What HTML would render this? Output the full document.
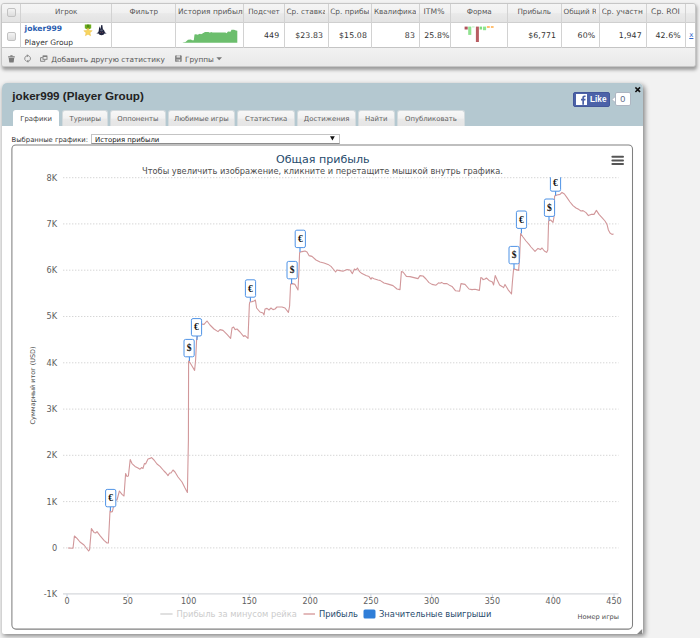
<!DOCTYPE html>
<html lang="ru">
<head>
<meta charset="utf-8">
<title>joker999 (Player Group)</title>
<style>
*{box-sizing:border-box;margin:0;padding:0}
html,body{width:700px;height:638px;overflow:hidden;background:#f2f2f2}
body{position:relative;font-family:"DejaVu Sans","Liberation Sans",sans-serif;font-size:7.5px;color:#333}
.abs{position:absolute}
#grid{position:absolute;left:1.2px;top:3px;width:694.7px;height:64.4px;background:#ececec;border:1px solid #c6c6c6;border-radius:3px;box-shadow:1px 2.5px 3.5px rgba(0,0,0,.36);overflow:hidden}
#grid .hrow{position:absolute;left:0;top:0;width:100%;height:19px;background:linear-gradient(#f5f5f5 0%,#f0f0f0 48%,#e9e9e9 54%,#e3e3e3 100%);border-bottom:1px solid #cfcfcf}
#grid .drow{position:absolute;left:0;top:19px;width:100%;height:25px;background:#fff;border-bottom:1px solid #c4c4c4}
#grid .frow{position:absolute;left:0;top:44px;width:100%;height:19.4px;background:linear-gradient(#f2f2f2,#e8e8e8)}
.vl{position:absolute;top:0;width:1px;height:44px;background:#d2d2d2}
.th{position:absolute;top:0;height:18px;line-height:15.6px;font-size:7.2px;color:#555;white-space:nowrap;overflow:hidden}
.td{position:absolute;top:19px;height:24px;line-height:25.6px;font-size:7.8px;letter-spacing:.12px;color:#333;white-space:nowrap;text-align:right}
.xl{position:absolute;top:19px;line-height:25.6px;font-size:7px;color:#3366cc;text-decoration:underline}
.pname{position:absolute;left:22.4px;top:19px;font-weight:bold;font-size:7.6px;line-height:11px;color:#2a5db0}
.pgrp{position:absolute;left:22.4px;top:32.8px;font-size:7.5px;line-height:11px;color:#333}
.cb{position:absolute;width:9px;height:9px;border:1px solid #c2c2c2;border-radius:2px;background:linear-gradient(#f4f4f4,#dcdcdc)}
.ft{position:absolute;top:50px;font-size:7.34px;line-height:11px;color:#555;white-space:nowrap}
#panel{position:absolute;left:2px;top:83.3px;width:641.4px;height:551.2px;background:#fff;border-radius:5px 5px 2px 2px;box-shadow:1.5px 2px 5px rgba(0,0,0,.45)}
#phead{position:absolute;left:0;top:0;width:100%;height:42.9px;background:#b4c8d0;border-radius:5px 5px 0 0}
#ptitle{position:absolute;left:10.3px;top:6px;font-family:"Liberation Sans",sans-serif;font-weight:bold;font-size:11.67px;color:#222;line-height:14px;white-space:nowrap}
.tab{position:absolute;top:26.6px;height:16.3px;background:linear-gradient(#f7f7f7 0%,#f1f1f1 48%,#e9e9e9 54%,#e5e5e5 100%);border:1px solid #d3dadd;border-bottom:none;border-radius:3px 3px 0 0;font-size:6.9px;color:#606060;text-align:center;line-height:16.6px;white-space:nowrap}
.tab.act{background:#fff;height:17.5px;border-color:#fff;color:#444}
#sel{position:absolute;left:91px;top:133.7px;width:248.6px;height:10.7px;border:1px solid #c4c4c4;border-bottom-color:#8c8c8c;background:#fff;font-size:6.9px;line-height:10.8px;color:#111;padding-left:3px;white-space:nowrap}
#sellab{position:absolute;left:11.6px;top:134.9px;font-size:6.8px;line-height:10.4px;color:#333;white-space:nowrap}
#like{position:absolute;left:573.3px;top:92px;width:36.3px;height:14.6px;background:#4c62a8;border-radius:2px;border:1px solid #43579a}
#like .f{position:absolute;left:1.8px;top:.9px;width:10.8px;height:10.8px;background:#fff;overflow:hidden}
#like .t{position:absolute;left:15.8px;top:0;font-family:"Liberation Sans",sans-serif;font-weight:bold;font-size:8.2px;line-height:13.6px;color:#fff}
#cnt{position:absolute;left:614.6px;top:92.4px;width:16.2px;height:14px;background:#fff;border:1px solid #aeb6c2;border-radius:2px;font-family:"Liberation Sans",sans-serif;font-size:9px;line-height:12.6px;text-align:center;color:#5d6b88}
#close{position:absolute;left:634.6px;top:83.6px;font-family:"DejaVu Sans",sans-serif;font-weight:bold;font-size:10px;line-height:12px;color:#111}
</style>
</head>
<body>
<div id="grid">
<div class="hrow"></div><div class="drow"></div><div class="frow"></div>
<div class="vl" style="left:17.8px"></div>
<div class="vl" style="left:109.3px"></div>
<div class="vl" style="left:172.8px"></div>
<div class="vl" style="left:240.8px"></div>
<div class="vl" style="left:281.8px"></div>
<div class="vl" style="left:325.8px"></div>
<div class="vl" style="left:368.8px"></div>
<div class="vl" style="left:416.8px"></div>
<div class="vl" style="left:447.8px"></div>
<div class="vl" style="left:505.3px"></div>
<div class="vl" style="left:558.8px"></div>
<div class="vl" style="left:596.8px"></div>
<div class="vl" style="left:643.8px"></div>
<div class="vl" style="left:682.8px"></div>
<div class="cb" style="left:4.4px;top:4.2px"></div>
<div class="cb" style="left:4.4px;top:28px"></div>
<div class="th" style="left:18.3px;width:91.5px;text-align:center">Игрок</div>
<div class="th" style="left:109.8px;width:63.5px;text-align:center">Фильтр</div>
<div class="th" style="left:175.8px;width:64.7px;text-align:left;font-size:7.45px">История прибыли</div>
<div class="th" style="left:241.3px;width:41.0px;text-align:center">Подсчет</div>
<div class="th" style="left:284.3px;width:38.2px;text-align:left;font-size:7.35px">Ср. ставка</div>
<div class="th" style="left:328.0px;width:38.8px;text-align:left;font-size:7.4px">Ср. прибыль</div>
<div class="th" style="left:371.7px;width:42.6px;text-align:left">Квалификация</div>
<div class="th" style="left:417.3px;width:29.0px;text-align:center;font-size:7.7px">ITM%</div>
<div class="th" style="left:448.3px;width:57.5px;text-align:center">Форма</div>
<div class="th" style="left:505.8px;width:52.5px;text-align:center">Прибыль</div>
<div class="th" style="left:561.3px;width:32.7px;text-align:left">Общий ROI</div>
<div class="th" style="left:599.5px;width:41.4px;text-align:left;font-size:7.4px">Ср. участников</div>
<div class="th" style="left:644.3px;width:38.0px;text-align:center;font-size:7.7px">Ср. ROI</div>
<div class="td" style="right:415.6px;">449</div>
<div class="td" style="right:371.7px;">$23.83</div>
<div class="td" style="right:327.9px;">$15.08</div>
<div class="td" style="right:279.9px;">83</div>
<div class="td" style="right:245.3px;">25.8%</div>
<div class="td" style="right:138.7px;">$6,771</div>
<div class="td" style="right:99.6px;">60%</div>
<div class="td" style="right:53.1px;">1,947</div>
<div class="td" style="right:14.1px;">42.6%</div>
<a class="xl" style="left:687.1px">x</a>
<div class="pname">joker999</div><div class="pgrp">Player Group</div>
<div class="ft" style="left:49.0px">Добавить другую статистику</div>
<div class="ft" style="left:182.8px">Группы</div>
</div>
<svg class="abs" style="left:0;top:0" width="700" height="80" viewBox="0 0 700 80">
<polygon points="182.8,42.5 185.5,42.0 188.0,39.8 191.0,39.5 192.0,40.2 193.8,40.2 194.5,34.5 196.0,34.2 197.5,34.8 200.0,33.8 201.0,34.2 202.5,33.5 205.0,32.0 208.5,32.0 210.0,32.8 211.0,32.0 212.5,32.6 225.5,32.6 226.5,33.2 228.0,31.5 230.5,31.8 231.5,29.8 234.0,29.8 236.0,30.5 237.3,30.8 237.3,42.8 182.8,42.8" fill="#6cbe6d"/>
<rect x="464.6" y="26.6" width="3.1" height="2.9" fill="#b0525a"/><rect x="468.2" y="26.6" width="3.1" height="8.3" fill="#90e290"/><rect x="472.1" y="26.1" width="2.5" height="1.6" fill="#d4f4d4"/><rect x="475.9" y="26.6" width="3.0" height="15.4" fill="#b85c62"/><rect x="479.6" y="26.6" width="2.5" height="2.9" fill="#7fdc7f"/><rect x="483.0" y="26.6" width="3.1" height="3.6" fill="#8ee68e"/><rect x="486.9" y="26.1" width="2.9" height="1.8" fill="#ffb962"/><rect x="490.9" y="26.1" width="2.7" height="1.8" fill="#ffb962"/>
<!-- medal -->
<path d="M84.8 24.5h6.4v3.8l-3.2 1.4l-3.2-1.4z" fill="#6fae22"/>
<path d="M86.9 24.6h2.4v4h-2.4z" fill="#4e8e12"/>
<path d="M88.00 27.65 L89.20 30.44 L92.23 30.72 L89.95 32.73 L90.62 35.70 L88.00 34.15 L85.38 35.70 L86.05 32.73 L83.77 30.72 L86.80 30.44Z" fill="#f7d560" stroke="#eec14a" stroke-width=".5" stroke-linejoin="round"/>
<!-- shark -->
<path d="M98.7 31L99.3 26.2L100.4 29L101.3 25L102.3 25L102.9 29.3C104 29.9 104.6 31 104.8 32.2L106.7 33.6L104.5 33.6C104 34.7 102.9 35.2 101.5 35.2C100.1 35.2 99 34.7 98.5 33.6L96.3 33.6L98.2 32.2Z" fill="#20253f"/>
<rect x="100.2" y="29.6" width="2.6" height="1.6" rx=".6" fill="#69708a" opacity=".75"/><circle cx="100.3" cy="32.4" r=".45" fill="#c06060"/><circle cx="102.7" cy="32.4" r=".45" fill="#c06060"/>
<!-- trash -->
<g fill="#7a7a7a"><rect x="8" y="56.3" width="6.9" height="1.1" rx=".4"/><rect x="10.2" y="55.3" width="2.5" height="1.2" rx=".4"/><path d="M8.7 58h5.5l-.5 4.1a.6.6 0 0 1-.6.5h-3.3a.6.6 0 0 1-.6-.5z"/></g>
<!-- refresh -->
<g fill="none" stroke="#8c8c8c" stroke-width="1"><path d="M27.2 55.7a2.9 2.9 0 0 0-1.3 5.2"/><path d="M28 61.4a2.9 2.9 0 0 0 1.3-5.2"/></g>
<g fill="#8c8c8c"><path d="M26.9 54.3l2.3 1.5l-2.3 1.5z"/><path d="M28.3 59.8l-2.3 1.5l2.3 1.5z"/></g>
<!-- add window -->
<g fill="none" stroke="#7a7a7a" stroke-width=".9"><rect x="43" y="56" width="4" height="3.3"/><path d="M42.6 57.6h-2v3.7h4.2v-1.6"/></g>
<rect x="43" y="55.7" width="4" height="1.2" fill="#7a7a7a"/>
<!-- disk -->
<g><rect x="175.1" y="55.3" width="6.6" height="6.7" rx="1" fill="#808080"/><rect x="176.6" y="55.3" width="3.4" height="2.3" fill="#d8d8d8"/><rect x="176.3" y="59" width="4.2" height="3" fill="#a8a8a8"/><rect x="178.8" y="59.8" width="1.1" height="1.6" fill="#eee"/></g>
<path d="M216.4 57.2h5.6l-2.8 3.1z" fill="#777"/>
</svg>
<div id="panel">
<div id="phead"></div>
<div id="ptitle">joker999 (Player Group)</div>
<div class="tab act" style="left:11.0px;width:46.4px">Графики</div><div class="tab" style="left:60.4px;width:45.6px">Турниры</div><div class="tab" style="left:108.2px;width:55.4px">Оппоненты</div><div class="tab" style="left:166.0px;width:66.8px">Любимые игры</div><div class="tab" style="left:235.4px;width:57.6px">Статистика</div><div class="tab" style="left:295.4px;width:58.4px">Достижения</div><div class="tab" style="left:356.0px;width:36.6px">Найти</div><div class="tab" style="left:395.0px;width:67.8px">Опубликовать</div>
</div>
<div id="like"><div class="f"><svg width="10.8" height="10.8" viewBox="0 0 10.8 10.8"><path d="M6.3 10.8V6.4H5V4.8h1.3V3.7c0-1.4.8-2.2 2.1-2.2h1.2v1.6h-.8c-.6 0-.8.3-.8.8v.9h1.6L9.4 6.4H8v4.4z" fill="#4c62a8"/></svg></div><div class="t">Like</div></div>
<svg class="abs" style="left:610.6px;top:95.5px" width="5" height="7" viewBox="0 0 5 7"><path d="M4.9 0L.8 3.5L4.9 7" fill="#fff" stroke="#aeb6c2" stroke-width=".9"/></svg>
<div id="cnt">0</div>
<svg class="abs" style="left:633.7px;top:85.7px" width="8" height="8" viewBox="0 0 8 8"><path d="M2 2l3.5 3.4M5.5 2l-3.5 3.4" stroke="#111" stroke-width="1.6" stroke-linecap="square" fill="none"/></svg>
<div id="sellab">Выбранные графики:</div>
<div id="sel">История прибыли</div>
<svg class="abs" style="left:330px;top:136px" width="5" height="5" viewBox="0 0 5 5"><path d="M0 .2h4.8L2.4 4.6z" fill="#111"/></svg>
<svg class="abs" style="left:0;top:0" width="700" height="638" viewBox="0 0 700 638">
<defs><clipPath id="plot"><rect x="60" y="177.2" width="562" height="420"/></clipPath></defs>
<rect x="11.9" y="145" width="620.6" height="484.1" rx="4" fill="#fff" stroke="#808080" stroke-width="1.05"/>
<g stroke="#d6d6d6" stroke-width="1" stroke-dasharray="1.4 1.6" fill="none"><line x1="63" x2="618.5" y1="547.9" y2="547.9"/><line x1="63" x2="618.5" y1="501.6" y2="501.6"/><line x1="63" x2="618.5" y1="455.3" y2="455.3"/><line x1="63" x2="618.5" y1="409.1" y2="409.1"/><line x1="63" x2="618.5" y1="362.8" y2="362.8"/><line x1="63" x2="618.5" y1="316.5" y2="316.5"/><line x1="63" x2="618.5" y1="270.2" y2="270.2"/><line x1="63" x2="618.5" y1="223.9" y2="223.9"/><line x1="63" x2="618.5" y1="177.7" y2="177.7"/></g>
<line x1="63" x2="618.5" y1="593.9" y2="593.9" stroke="#d6d8dc" stroke-width="1.1"/>
<g stroke="#c9d4e2" stroke-width="1"><line x1="67.0" x2="67.0" y1="593.9" y2="597"/><line x1="127.8" x2="127.8" y1="593.9" y2="597"/><line x1="188.6" x2="188.6" y1="593.9" y2="597"/><line x1="249.3" x2="249.3" y1="593.9" y2="597"/><line x1="310.1" x2="310.1" y1="593.9" y2="597"/><line x1="370.9" x2="370.9" y1="593.9" y2="597"/><line x1="431.7" x2="431.7" y1="593.9" y2="597"/><line x1="492.4" x2="492.4" y1="593.9" y2="597"/><line x1="553.2" x2="553.2" y1="593.9" y2="597"/><line x1="614.0" x2="614.0" y1="593.9" y2="597"/></g>
<g font-family="DejaVu Sans, Liberation Sans, sans-serif" font-size="8.2" fill="#5e5e5e" text-anchor="end"><text x="57.2" y="597.1">-1K</text><text x="57.2" y="550.8">0</text><text x="57.2" y="504.5">1K</text><text x="57.2" y="458.2">2K</text><text x="57.2" y="412.0">3K</text><text x="57.2" y="365.7">4K</text><text x="57.2" y="319.4">5K</text><text x="57.2" y="273.1">6K</text><text x="57.2" y="226.8">7K</text><text x="57.2" y="180.6">8K</text></g>
<g font-family="DejaVu Sans, Liberation Sans, sans-serif" font-size="8.0" fill="#5e5e5e" text-anchor="middle"><text x="67.0" y="604.1">0</text><text x="127.8" y="604.1">50</text><text x="188.6" y="604.1">100</text><text x="249.3" y="604.1">150</text><text x="310.1" y="604.1">200</text><text x="370.9" y="604.1">250</text><text x="431.7" y="604.1">300</text><text x="492.4" y="604.1">350</text><text x="553.2" y="604.1">400</text><text x="614.0" y="604.1">450</text></g>
<text x="322.8" y="163" font-family="DejaVu Sans, Liberation Sans, sans-serif" font-size="11.1" fill="#274b6d" text-anchor="middle">Общая прибыль</text>
<text x="322.5" y="173.5" font-family="DejaVu Sans, Liberation Sans, sans-serif" font-size="8.27" fill="#4d4d4d" text-anchor="middle">Чтобы увеличить изображение, кликните и перетащите мышкой внутрь графика.</text>
<text transform="translate(34.5,385.4) rotate(-90)" font-family="DejaVu Sans, Liberation Sans, sans-serif" font-size="6.47" fill="#4d4d4d" text-anchor="middle">Суммарный итог (USD)</text>
<text x="619" y="619" font-family="DejaVu Sans, Liberation Sans, sans-serif" font-size="6.6" fill="#4d4d4d" text-anchor="end">Номер игры</text>
<g clip-path="url(#plot)">
<path d="M68.0 548.0 L73.0 548.2 L74.4 536.0 L77.0 538.4 L80.0 542.0 L84.0 545.0 L88.6 551.0 L89.6 549.6 L91.4 528.6 L94.0 532.4 L95.6 533.0 L97.0 531.6 L100.0 535.6 L104.0 540.4 L107.0 543.0 L108.4 543.0 L110.0 511.0 L111.0 512.0 L112.4 511.6 L113.4 507.0 L115.0 500.0 L117.0 500.0 L119.4 491.0 L122.0 494.4 L124.0 496.0 L125.6 473.6 L127.0 476.4 L128.4 476.0 L130.2 459.6 L132.0 463.6 L135.0 466.4 L138.0 468.0 L140.0 469.2 L141.6 467.6 L143.0 468.4 L144.4 463.6 L145.6 464.0 L148.0 459.0 L150.0 458.4 L151.6 457.6 L154.0 460.0 L157.0 464.0 L160.0 466.4 L164.0 471.0 L166.0 473.0 L168.0 475.6 L169.6 473.0 L171.0 473.0 L173.0 470.0 L175.0 472.0 L178.0 477.0 L182.0 482.0 L185.0 488.0 L187.4 492.4 L188.4 440.0 L188.6 361.0 L189.0 361.0 L192.0 366.0 L194.6 370.4 L195.6 360.0 L196.6 340.0 L198.0 333.0 L199.5 326.0 L201.6 324.0 L204.0 324.4 L207.0 321.0 L210.0 325.0 L214.0 329.0 L218.0 331.6 L220.0 329.6 L223.0 330.4 L227.0 334.4 L230.6 338.4 L232.0 328.0 L233.6 327.0 L235.0 329.6 L237.0 329.0 L240.0 332.0 L243.6 336.4 L245.0 335.6 L248.0 338.4 L249.4 304.0 L249.8 302.0 L252.0 301.6 L254.0 301.0 L255.4 300.0 L256.6 308.0 L260.0 312.0 L263.0 313.0 L264.0 315.0 L265.0 309.0 L267.0 308.4 L269.0 310.0 L271.0 308.0 L273.0 309.6 L275.0 309.0 L277.0 307.0 L282.0 307.0 L285.0 308.0 L288.4 312.4 L289.6 306.0 L290.6 284.0 L292.4 283.6 L295.0 284.4 L298.0 290.0 L299.0 270.0 L299.6 252.4 L302.0 251.6 L305.0 251.0 L307.0 252.0 L309.0 255.6 L312.0 256.4 L316.0 260.0 L320.0 262.0 L324.0 263.0 L328.0 264.4 L331.0 266.4 L334.0 270.0 L335.6 272.0 L337.0 270.0 L340.0 270.6 L343.0 271.2 L347.0 269.6 L350.0 270.0 L352.4 273.6 L354.4 269.0 L356.0 270.0 L357.4 268.0 L359.6 271.6 L362.0 273.6 L366.0 275.6 L369.0 276.6 L371.0 279.2 L372.0 277.6 L374.0 278.8 L378.0 280.0 L380.0 280.4 L384.0 283.0 L389.0 284.4 L393.0 285.6 L397.0 289.0 L400.0 289.6 L401.4 271.6 L403.0 272.0 L406.4 276.4 L410.0 276.6 L414.0 277.6 L418.0 278.6 L420.0 275.6 L423.0 276.0 L426.0 279.0 L429.0 282.6 L432.0 284.4 L436.0 285.2 L438.6 282.8 L440.0 283.2 L441.6 282.4 L443.6 283.6 L447.0 283.6 L450.0 285.6 L452.0 286.4 L455.6 290.8 L459.6 291.2 L461.0 283.6 L465.0 284.4 L469.0 289.0 L472.0 289.6 L475.0 289.2 L479.4 290.4 L480.8 277.6 L482.0 278.0 L483.0 279.6 L485.0 279.0 L486.4 278.0 L489.0 280.4 L492.4 282.0 L493.6 285.0 L495.2 275.6 L497.0 279.6 L499.6 285.0 L502.0 286.4 L503.6 287.6 L505.0 284.4 L508.0 289.6 L511.5 294.0 L512.4 282.0 L513.6 269.0 L516.0 269.6 L518.6 270.4 L519.6 258.0 L520.6 233.6 L523.0 237.0 L526.0 241.0 L529.0 244.4 L531.0 247.0 L535.0 251.4 L538.0 248.4 L540.4 249.6 L542.0 248.0 L544.4 251.0 L546.6 252.4 L547.8 250.0 L548.6 221.0 L550.6 220.0 L553.0 222.4 L554.0 217.0 L554.6 196.0 L557.0 195.0 L560.0 194.4 L562.0 192.4 L564.4 194.0 L567.0 197.6 L570.0 202.0 L573.0 205.6 L576.0 208.0 L579.0 209.6 L581.0 211.0 L583.0 210.6 L586.0 212.6 L588.4 215.6 L591.0 214.4 L594.0 214.4 L596.4 210.4 L599.0 214.4 L602.0 217.6 L605.0 221.0 L607.0 224.4 L608.4 230.0 L610.0 233.0 L612.0 234.4 L613.6 234.0" fill="none" stroke="#d1979a" stroke-width="1.1" stroke-linejoin="round"/>
<g font-family="Liberation Serif, DejaVu Serif, serif" font-weight="bold" font-size="9.6" fill="#111" text-anchor="middle"><g><path d="M110.4 506.4V511.0" stroke="#4a8fe4" stroke-width="1.1" fill="none"/><rect x="105.6" y="489.4" width="10.2" height="17.4" rx="1.6" fill="#fff" stroke="#4f93e6" stroke-width="1"/><text x="110.7" y="501.2">€</text></g><g><path d="M189.4 356.4V361.0" stroke="#4a8fe4" stroke-width="1.1" fill="none"/><rect x="184.0" y="339.4" width="10.2" height="17.4" rx="1.6" fill="#fff" stroke="#4f93e6" stroke-width="1"/><text x="189.1" y="351.2">$</text></g><g><path d="M197.0 335.6V340.0" stroke="#4a8fe4" stroke-width="1.1" fill="none"/><rect x="191.4" y="318.6" width="10.2" height="17.4" rx="1.6" fill="#fff" stroke="#4f93e6" stroke-width="1"/><text x="196.5" y="330.4">€</text></g><g><path d="M250.4 296.8V301.5" stroke="#4a8fe4" stroke-width="1.1" fill="none"/><rect x="245.4" y="279.8" width="10.2" height="17.4" rx="1.6" fill="#fff" stroke="#4f93e6" stroke-width="1"/><text x="250.5" y="291.6">€</text></g><g><path d="M291.6 278.4V284.0" stroke="#4a8fe4" stroke-width="1.1" fill="none"/><rect x="287.0" y="261.4" width="10.2" height="17.4" rx="1.6" fill="#fff" stroke="#4f93e6" stroke-width="1"/><text x="292.1" y="273.2">$</text></g><g><path d="M300.0 247.2V252.0" stroke="#4a8fe4" stroke-width="1.1" fill="none"/><rect x="295.2" y="230.2" width="10.2" height="17.4" rx="1.6" fill="#fff" stroke="#4f93e6" stroke-width="1"/><text x="300.3" y="242.0">€</text></g><g><path d="M514.0 263.4V269.0" stroke="#4a8fe4" stroke-width="1.1" fill="none"/><rect x="509.0" y="246.4" width="10.2" height="17.4" rx="1.6" fill="#fff" stroke="#4f93e6" stroke-width="1"/><text x="514.1" y="258.2">$</text></g><g><path d="M521.4 228.0V233.5" stroke="#4a8fe4" stroke-width="1.1" fill="none"/><rect x="516.4" y="211.0" width="10.2" height="17.4" rx="1.6" fill="#fff" stroke="#4f93e6" stroke-width="1"/><text x="521.5" y="222.8">€</text></g><g><path d="M549.0 216.0V220.5" stroke="#4a8fe4" stroke-width="1.1" fill="none"/><rect x="544.4" y="199.0" width="10.2" height="17.4" rx="1.6" fill="#fff" stroke="#4f93e6" stroke-width="1"/><text x="549.5" y="210.8">$</text></g><g><path d="M555.6 190.8V195.5" stroke="#4a8fe4" stroke-width="1.1" fill="none"/><rect x="550.4" y="173.8" width="10.2" height="17.4" rx="1.6" fill="#fff" stroke="#4f93e6" stroke-width="1"/><text x="555.5" y="185.6">€</text></g></g>
</g>
<g stroke="#555" stroke-width="2" stroke-linecap="round"><line x1="612.4" x2="623" y1="156.7" y2="156.7"/><line x1="612.4" x2="623" y1="160.4" y2="160.4"/><line x1="612.4" x2="623" y1="164.1" y2="164.1"/></g>
<g font-family="DejaVu Sans, Liberation Sans, sans-serif" font-size="8.33">
<line x1="160.3" x2="172.6" y1="614" y2="614" stroke="#ccc" stroke-width="1.2"/>
<text x="176.5" y="617.3" fill="#cccccc">Прибыль за минусом рейка</text>
<line x1="303.5" x2="315" y1="614" y2="614" stroke="#d08c8e" stroke-width="1.2"/>
<text x="319" y="617.3" fill="#274b6d">Прибыль</text>
<rect x="363.5" y="609.4" width="12" height="9" rx="1.5" fill="#2f7ed8"/>
<text x="379" y="617.3" fill="#274b6d">Значительные выигрыши</text>
</g>
<path d="M642.2 628.9v5.1h-5.1z" fill="#858585"/>
</svg>
</body>
</html>
